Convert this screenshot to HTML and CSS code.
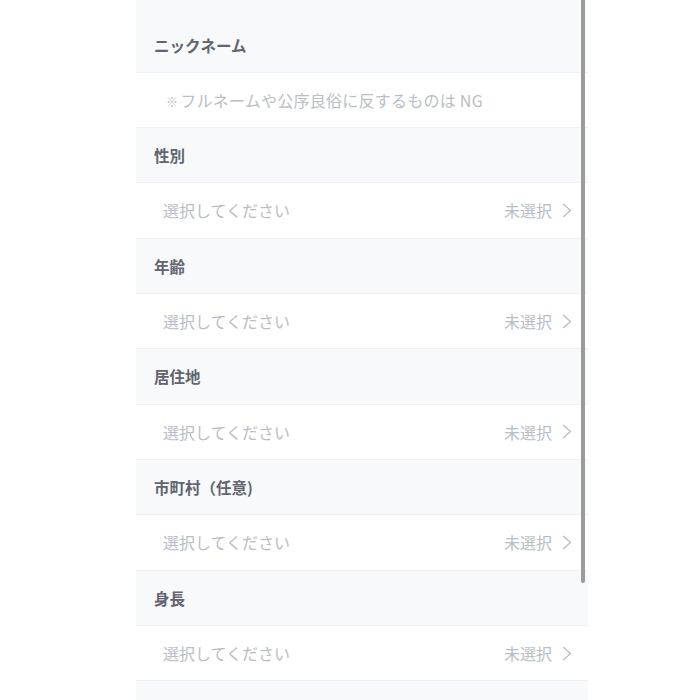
FILE: index.html
```html
<!DOCTYPE html>
<html lang="ja">
  <head>
    <meta charset="UTF-8">
    <title>プロフィール編集</title>
    <link rel="stylesheet" href="styles.css">
  </head>
  <body>
    <div class="panel">
      <!-- ニックネーム -->
      <div class="section-head first">ニックネーム</div>
      <div class="field">
        <span class="hint"><span class="mark">※</span>フルネームや公序良俗に反するものは NG</span>
      </div>

      <!-- 性別 -->
      <div class="section-head">性別</div>
      <div class="field select">
        <span class="placeholder">選択してください</span>
        <span class="value">未選択
          <svg class="chevron" width="10" height="15" viewBox="0 0 10 15"><polyline points="1.2,1 8.5,7.5 1.2,14" /></svg>
        </span>
      </div>

      <!-- 年齢 -->
      <div class="section-head">年齢</div>
      <div class="field select">
        <span class="placeholder">選択してください</span>
        <span class="value">未選択
          <svg class="chevron" width="10" height="15" viewBox="0 0 10 15"><polyline points="1.2,1 8.5,7.5 1.2,14" /></svg>
        </span>
      </div>

      <!-- 居住地 -->
      <div class="section-head">居住地</div>
      <div class="field select">
        <span class="placeholder">選択してください</span>
        <span class="value">未選択
          <svg class="chevron" width="10" height="15" viewBox="0 0 10 15"><polyline points="1.2,1 8.5,7.5 1.2,14" /></svg>
        </span>
      </div>

      <!-- 市町村 -->
      <div class="section-head">市町村（任意)</div>
      <div class="field select">
        <span class="placeholder">選択してください</span>
        <span class="value">未選択
          <svg class="chevron" width="10" height="15" viewBox="0 0 10 15"><polyline points="1.2,1 8.5,7.5 1.2,14" /></svg>
        </span>
      </div>

      <!-- 身長 -->
      <div class="section-head">身長</div>
      <div class="field select">
        <span class="placeholder">選択してください</span>
        <span class="value">未選択
          <svg class="chevron" width="10" height="15" viewBox="0 0 10 15"><polyline points="1.2,1 8.5,7.5 1.2,14" /></svg>
        </span>
      </div>

      <div class="section-head"></div>

      <div class="scrollbar"></div>
    </div>
  </body>
</html>
```

FILE: styles.css
```css
/* ページ全体 */
body {
  margin: 0;
  background-color: white;
  font-family: "Noto Sans CJK JP", "Noto Sans", sans-serif;
}

.panel {
  position: relative;
  margin-left: 136px;
  width: 452px;
  height: 700px;
  overflow: hidden;
  background-color: #f8f9fb;
}

/* 見出し行 */
.section-head {
  height: 55.33px;
  box-sizing: border-box;
  display: flex;
  align-items: center;
  padding-left: 18px;
  background-color: #f8f9fb;
  border-bottom: 1px solid #eef0f3;
  font-size: 15.5px;
  font-weight: bold;
  color: #60656f;
}

.section-head.first {
  height: 72.66px;
  padding-top: 19px;
}

/* 入力行 */
.field {
  height: 55.33px;
  box-sizing: border-box;
  display: flex;
  align-items: center;
  justify-content: space-between;
  padding: 0 16px 0 27px;
  background-color: white;
  border-bottom: 1px solid #eef0f3;
  font-size: 16px;
  color: #b9bdc7;
}

.hint {
  padding-left: 3px;
  letter-spacing: 0.25px;
}

.hint .mark {
  font-size: 12px;
  margin-right: 2px;
}

.value {
  display: flex;
  align-items: center;
  gap: 10px;
}

.chevron polyline {
  fill: none;
  stroke: #b9bdc7;
  stroke-width: 1.3;
}

/* スクロールバー */
.scrollbar {
  position: absolute;
  top: 0;
  right: 3px;
  width: 4px;
  height: 583px;
  border-radius: 0 0 2px 2px;
  background-color: #9b9b9b;
}
```
